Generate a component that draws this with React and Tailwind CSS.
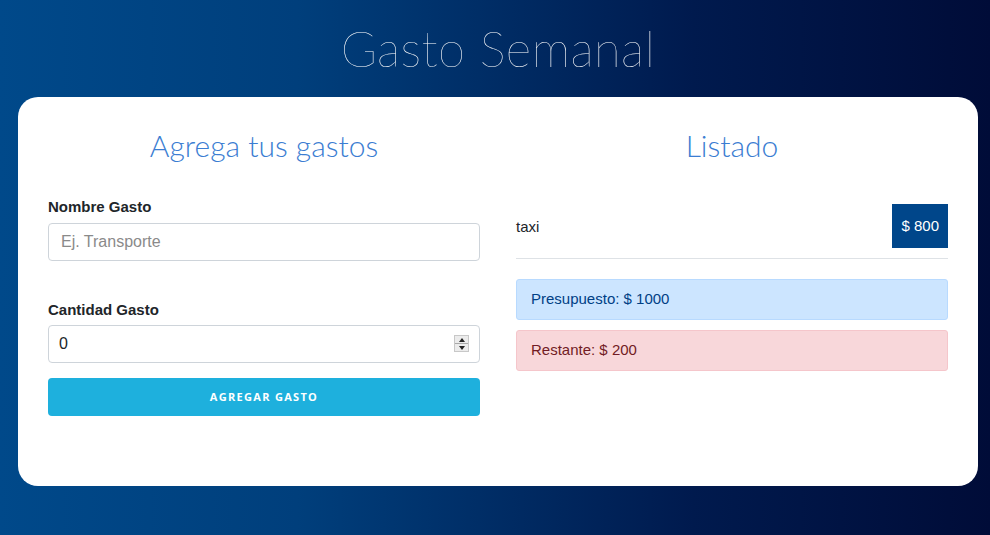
import { useState } from "react";

export default function App() {
  const [nombre, setNombre] = useState("");
  const [cantidad, setCantidad] = useState(0);

  return (
    <div className="h-screen overflow-hidden w-full bg-[linear-gradient(to_right,#00498a_0%,#003f7c_30%,#001a4e_70%,#000c38_100%)] pl-[18px] pt-[20px] font-['Liberation_Sans',Arial,sans-serif]">
      <div className="w-[960px]">
        {/* Titulo */}
        <h1 className="text-center text-white font-['Lato',sans-serif] font-extralight text-[49px] leading-[56px] tracking-[0.4px] mb-[21px]">
          Gasto Semanal
        </h1>

        <div className="bg-white rounded-[20px] px-[30px] pt-[28px] pb-[70px] grid grid-cols-2 gap-[36px]">
          {/* Formulario */}
          <div>
            <h2 className="text-center text-[#3b7dd2] font-['Lato',sans-serif] font-light text-[30px] leading-[40px] mb-[31px]">
              Agrega tus gastos
            </h2>

            <label className="block text-[15px] font-bold text-[#212529] mb-[4px]">
              Nombre Gasto
            </label>
            <input
              type="text"
              placeholder="Ej. Transporte"
              value={nombre}
              onChange={(e) => setNombre(e.target.value)}
              className="w-full h-[38px] border border-[#ced4da] rounded-[4px] px-[12px] text-[16px] text-[#495057] placeholder:text-[#8a8a8a] outline-none"
            />

            <label className="block text-[15px] font-bold text-[#212529] mt-[38px] mb-[4px]">
              Cantidad Gasto
            </label>
            <div className="relative">
              <input
                type="number"
                value={cantidad}
                onChange={(e) => setCantidad(e.target.value)}
                className="w-full h-[38px] border border-[#ced4da] rounded-[4px] px-[10px] text-[16px] text-[#212529] outline-none [appearance:textfield] [&::-webkit-inner-spin-button]:appearance-none [&::-webkit-outer-spin-button]:appearance-none"
              />
              {/* spinner */}
              <div className="absolute right-[11px] top-[10px] w-[15px] h-[17px] flex flex-col bg-[#ececec] border border-[#c8c8c8]">
                <div className="flex-1 flex items-center justify-center border-b border-[#a9a9a9]">
                  <span className="w-0 h-0 border-l-[3px] border-r-[3px] border-b-[4px] border-l-transparent border-r-transparent border-b-[#222]"></span>
                </div>
                <div className="flex-1 flex items-center justify-center">
                  <span className="w-0 h-0 border-l-[3px] border-r-[3px] border-t-[4px] border-l-transparent border-r-transparent border-t-[#222]"></span>
                </div>
              </div>
            </div>

            <button className="mt-[15px] w-full h-[38px] rounded-[4px] bg-[#1eb0dd] text-white text-[11px] font-bold tracking-[1.3px] font-['Open_Sans',sans-serif]">
              AGREGAR GASTO
            </button>
          </div>

          {/* Listado */}
          <div>
            <h2 className="text-center text-[#3b7dd2] font-['Lato',sans-serif] font-light text-[30px] leading-[40px] mb-[39px]">
              Listado
            </h2>

            <div className="flex items-center justify-between border-b border-[#dee2e6] pb-[10px]">
              <span className="text-[15px] text-[#212529] pt-[2px]">taxi</span>
              <span className="bg-[#00468a] text-white text-[15px] h-[44px] px-[9px] flex items-center">
                $ 800
              </span>
            </div>

            <div className="mt-[20px] h-[41px] flex items-center px-[14px] rounded-[3px] border border-[#b8daff] bg-[#cce5ff] text-[#004085] text-[15px]">
              Presupuesto: $ 1000
            </div>
            <div className="mt-[10px] h-[41px] flex items-center px-[14px] rounded-[3px] border border-[#f5c6cb] bg-[#f8d7da] text-[#721c24] text-[15px]">
              Restante: $ 200
            </div>
          </div>
        </div>
      </div>
    </div>
  );
}
